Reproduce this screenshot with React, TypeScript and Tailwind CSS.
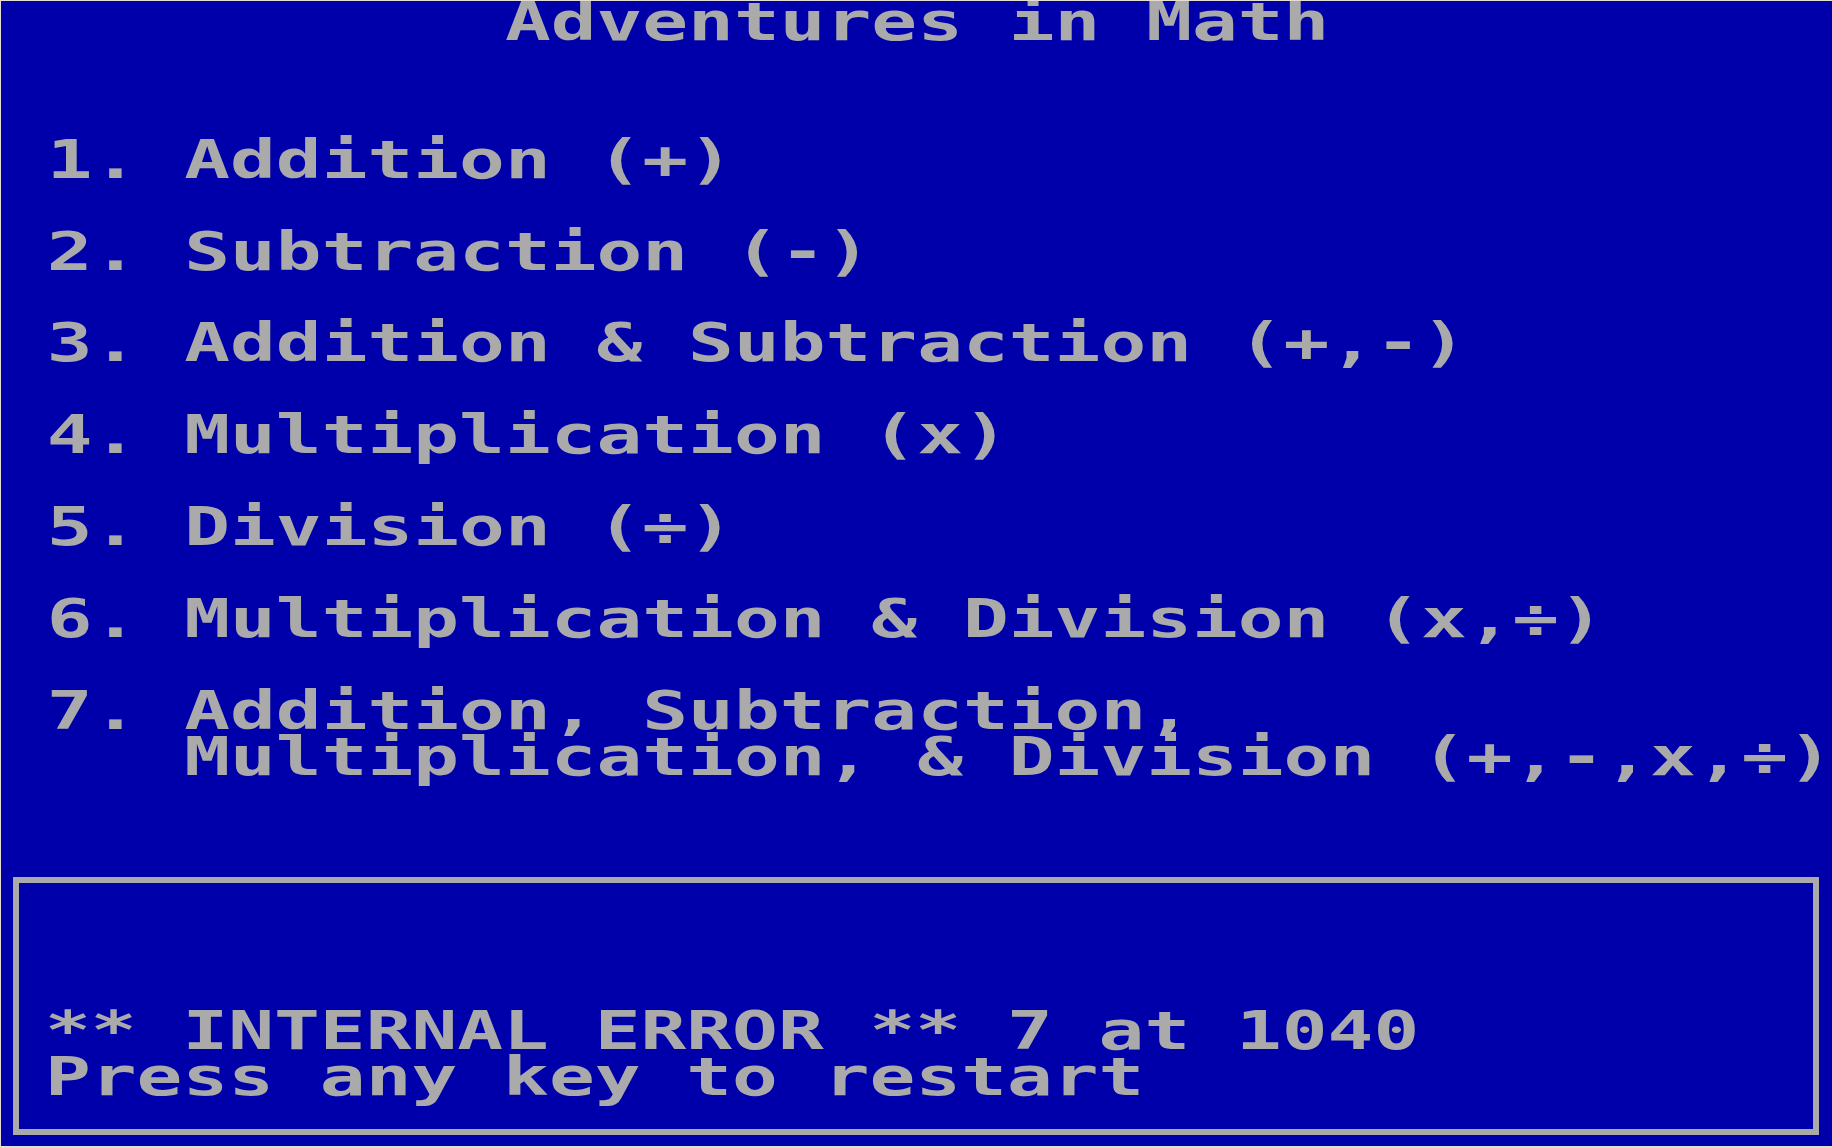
const screenRows = [
  "           Adventures in Math",
  "",
  "",
  " 1. Addition (+)",
  "",
  " 2. Subtraction (-)",
  "",
  " 3. Addition & Subtraction (+,-)",
  "",
  " 4. Multiplication (x)",
  "",
  " 5. Division (÷)",
  "",
  " 6. Multiplication & Division (x,÷)",
  "",
  " 7. Addition, Subtraction,",
  "    Multiplication, & Division (+,-,x,÷)",
  "",
  "",
];

const errorRows = ["** INTERNAL ERROR ** 7 at 1040", "Press any key to restart"];

// one text-mode row: 40 columns of 45.8px, glyphs widened to fill the cell
function Row({ text }: { text: string }) {
  return (
    <div className="h-[45.92px] leading-[42px] whitespace-pre">
      <span className="inline-block origin-left scale-x-[1.409]">{text || " "}</span>
    </div>
  );
}

export default function App() {
  return (
    <div
      className="w-[1832px] h-[1148px] overflow-hidden box-border bg-[#0000aa] text-[#aaaaaa] text-[54px] font-bold border-t border-l border-b-2 border-[#e6ddd2] flex flex-col"
      style={{ fontFamily: '"DejaVu Sans Mono", "Liberation Mono", monospace' }}
    >
      {screenRows.map((r, i) => (
        <Row key={i} text={r} />
      ))}

      {/* Error box */}
      <div className="ml-[12px] mt-[4px] w-[1806px] h-[258px] box-border border-[6px] border-[#aaaaaa] pt-[127px] pl-[26px]">
        {errorRows.map((r, i) => (
          <Row key={i} text={r} />
        ))}
      </div>
    </div>
  );
}
